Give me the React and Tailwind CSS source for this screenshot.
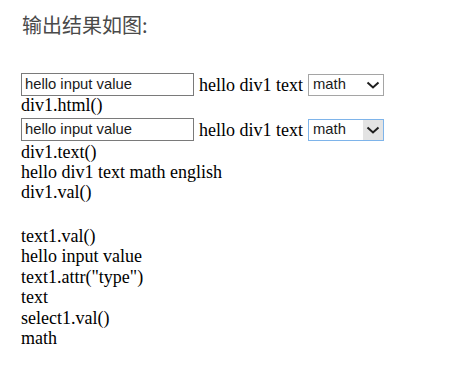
import React from "react";

function Chevron() {
  return (
    <svg width="14" height="8" viewBox="0 0 14 8" className="block">
      <path d="M1.5 1.5 L7 6.5 L12.5 1.5" fill="none" stroke="#1f1f1f" strokeWidth="2" />
    </svg>
  );
}

function FakeInput() {
  return (
    <div className="flex h-[23px] w-[173px] shrink-0 items-center border border-[#7a7a7a] bg-white pl-[3px] text-[14.8px] leading-[17px] text-[#1a1a1a] [font-family:'Liberation_Sans',Arial,sans-serif]">
      hello input value
    </div>
  );
}

function FakeSelect({ focused }) {
  return (
    <div
      className={
        focused
          ? "flex h-[22px] w-[76px] shrink-0 items-stretch border border-[#7eb4ea] bg-white text-[14.8px] leading-[17px] text-[#1a1a1a] [font-family:'Liberation_Sans',Arial,sans-serif]"
          : "flex h-[22px] w-[76px] shrink-0 items-stretch border border-[#a5a5a5] bg-white text-[14.8px] leading-[17px] text-[#1a1a1a] [font-family:'Liberation_Sans',Arial,sans-serif]"
      }
    >
      <div className="flex flex-1 items-center pl-[4px]">math</div>
      <div
        className={
          focused
            ? "flex w-[20px] items-center justify-center bg-[#e3e3e3]"
            : "flex w-[20px] items-center justify-center bg-white"
        }
      >
        <Chevron />
      </div>
    </div>
  );
}

export default function App() {
  return (
    <div className="h-[384px] w-[470px] overflow-hidden bg-white">
      <div className="pl-[22px] pt-[10px] text-[20px] leading-[29px] text-[#4a4a4a] [font-family:'Noto_Sans_CJK_SC','Noto_Sans',sans-serif]">
        输出结果如图:
      </div>
      <div className="pl-[21px] text-[18px] text-black [font-family:'Liberation_Serif','Times_New_Roman',serif]">
        <div className="mt-[34px] flex h-[23px] items-center gap-[5px]">
          <FakeInput />
          <span className="leading-[20px]">hello div1 text</span>
          <FakeSelect focused={false} />
        </div>
        <div className="-mt-[1px] leading-[20px]">div1.html()</div>
        <div className="mt-[3px] flex h-[23px] items-center gap-[5px]">
          <FakeInput />
          <span className="leading-[20px]">hello div1 text</span>
          <FakeSelect focused={true} />
        </div>
        <div className="mt-[1px] leading-[20px]">div1.text()</div>
        <div className="leading-[20px]">hello div1 text math english</div>
        <div className="leading-[20px]">div1.val()</div>
        <div className="mt-[24px] leading-[20.4px]">
          <div>text1.val()</div>
          <div>hello input value</div>
          <div>text1.attr("type")</div>
          <div>text</div>
          <div>select1.val()</div>
          <div>math</div>
        </div>
      </div>
    </div>
  );
}
